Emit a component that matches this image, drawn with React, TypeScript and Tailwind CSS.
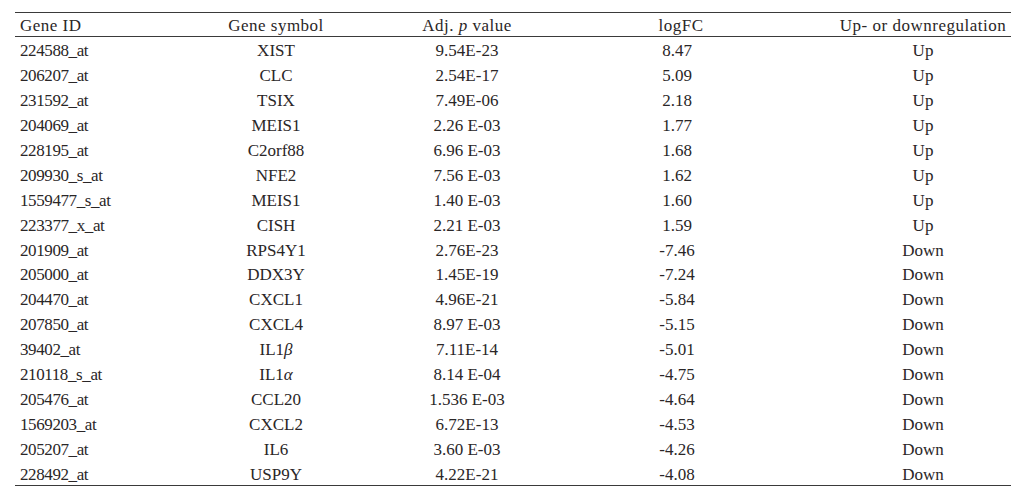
const rows: [string, string, string, string, string][] = [
  ["224588_at", "XIST", "9.54E-23", "8.47", "Up"],
  ["206207_at", "CLC", "2.54E-17", "5.09", "Up"],
  ["231592_at", "TSIX", "7.49E-06", "2.18", "Up"],
  ["204069_at", "MEIS1", "2.26 E-03", "1.77", "Up"],
  ["228195_at", "C2orf88", "6.96 E-03", "1.68", "Up"],
  ["209930_s_at", "NFE2", "7.56 E-03", "1.62", "Up"],
  ["1559477_s_at", "MEIS1", "1.40 E-03", "1.60", "Up"],
  ["223377_x_at", "CISH", "2.21 E-03", "1.59", "Up"],
  ["201909_at", "RPS4Y1", "2.76E-23", "-7.46", "Down"],
  ["205000_at", "DDX3Y", "1.45E-19", "-7.24", "Down"],
  ["204470_at", "CXCL1", "4.96E-21", "-5.84", "Down"],
  ["207850_at", "CXCL4", "8.97 E-03", "-5.15", "Down"],
  ["39402_at", "IL1β", "7.11E-14", "-5.01", "Down"],
  ["210118_s_at", "IL1α", "8.14 E-04", "-4.75", "Down"],
  ["205476_at", "CCL20", "1.536 E-03", "-4.64", "Down"],
  ["1569203_at", "CXCL2", "6.72E-13", "-4.53", "Down"],
  ["205207_at", "IL6", "3.60 E-03", "-4.26", "Down"],
  ["228492_at", "USP9Y", "4.22E-21", "-4.08", "Down"],
];

const grid = "grid grid-cols-[166px_190px_192px_228px_220px] items-center";

function Symbol({ s }: { s: string }) {
  // greek suffixes are set in math italic
  const m = s.match(/^(IL1)([αβ])$/);
  if (!m) return <>{s}</>;
  return (
    <>
      {m[1]}
      <span className="italic">{m[2]}</span>
    </>
  );
}

export default function App() {
  return (
    <div
      className="w-[1027px] h-[504px] bg-white pt-[12px] pl-[15px] text-[#2a2627] text-[17px] leading-none"
      style={{ fontFamily: '"Liberation Serif", "Times New Roman", serif' }}
    >
      <div className="w-[996px] border-t border-b border-[#3a3a3a]">
        {/* header */}
        <div className={`${grid} h-[24px] pt-[2px] tracking-[0.5px] border-b border-[#3a3a3a]`}>
          <div className="pl-[5px]">Gene ID</div>
          <div className="text-center">Gene symbol</div>
          <div className="text-center">
            Adj. <span className="italic">p</span> value
          </div>
          <div className="text-center pl-[8px]">logFC</div>
          <div className="text-center pl-[44px]">Up- or downregulation</div>
        </div>

        {rows.map(([id, sym, p, fc, reg]) => (
          <div key={id + sym} className={`${grid} h-[24.9px] pt-[3px]`}>
            <div className="pl-[5px] tracking-[-0.4px]">{id}</div>
            <div className="text-center">
              <Symbol s={sym} />
            </div>
            <div className="text-center">{p}</div>
            <div className="text-center">{fc}</div>
            <div className="text-center pl-[44px]">{reg}</div>
          </div>
        ))}
      </div>
    </div>
  );
}
